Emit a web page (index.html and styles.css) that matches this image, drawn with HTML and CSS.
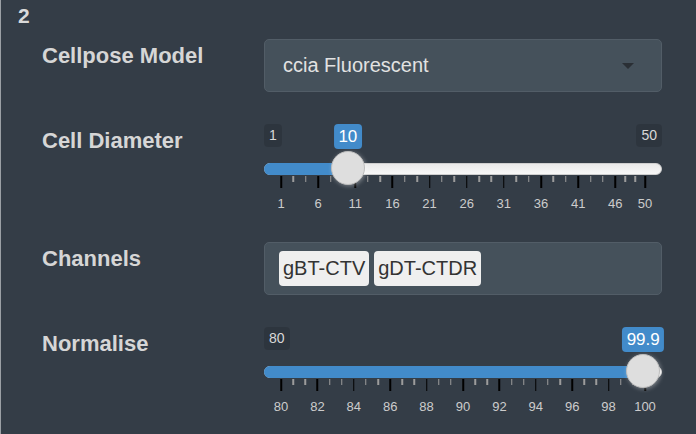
FILE: index.html
```html
<!DOCTYPE html>
<html>
<head>
<meta charset="utf-8">
<link rel="stylesheet" href="styles.css">
</head>
<body>
<div class="panel">
  <h4 class="step">2</h4>
  <div class="form">
    <div class="label">Cellpose Model</div>
    <div class="select">
      <span class="select-text">ccia Fluorescent</span>
      <span class="caret"></span>
    </div>

    <div class="label">Cell Diameter</div>
    <div class="slider">
      <div class="track"></div>
      <div class="bar" style="width:83.9px"></div>
      <span class="minmax min">1</span>
      <span class="minmax max">50</span>
      <div class="scale">
        <span class="tick" style="left:0%"></span>
        <span class="tick sm" style="left:3.401%"></span>
        <span class="tick sm" style="left:6.803%"></span>
        <span class="tick" style="left:10.204%"></span>
        <span class="tick sm" style="left:13.605%"></span>
        <span class="tick sm" style="left:17.007%"></span>
        <span class="tick" style="left:20.408%"></span>
        <span class="tick sm" style="left:23.810%"></span>
        <span class="tick sm" style="left:27.211%"></span>
        <span class="tick" style="left:30.612%"></span>
        <span class="tick sm" style="left:34.014%"></span>
        <span class="tick sm" style="left:37.415%"></span>
        <span class="tick" style="left:40.816%"></span>
        <span class="tick sm" style="left:44.218%"></span>
        <span class="tick sm" style="left:47.619%"></span>
        <span class="tick" style="left:51.020%"></span>
        <span class="tick sm" style="left:54.422%"></span>
        <span class="tick sm" style="left:57.823%"></span>
        <span class="tick" style="left:61.224%"></span>
        <span class="tick sm" style="left:64.626%"></span>
        <span class="tick sm" style="left:68.027%"></span>
        <span class="tick" style="left:71.429%"></span>
        <span class="tick sm" style="left:74.830%"></span>
        <span class="tick sm" style="left:78.231%"></span>
        <span class="tick" style="left:81.633%"></span>
        <span class="tick sm" style="left:85.034%"></span>
        <span class="tick sm" style="left:88.435%"></span>
        <span class="tick" style="left:91.837%"></span>
        <span class="tick sm" style="left:94.558%"></span>
        <span class="tick sm" style="left:97.279%"></span>
        <span class="tick" style="left:100%"></span>

        <span class="gl" style="left:0%">1</span>
        <span class="gl" style="left:10.204%">6</span>
        <span class="gl" style="left:20.408%">11</span>
        <span class="gl" style="left:30.612%">16</span>
        <span class="gl" style="left:40.816%">21</span>
        <span class="gl" style="left:51.020%">26</span>
        <span class="gl" style="left:61.224%">31</span>
        <span class="gl" style="left:71.429%">36</span>
        <span class="gl" style="left:81.633%">41</span>
        <span class="gl" style="left:91.837%">46</span>
        <span class="gl" style="left:100%">50</span>

        <span class="handle" style="left:18.367%"></span>
        <span class="single" style="left:18.367%">10</span>
      </div>
    </div>

    <div class="label">Channels</div>
    <div class="tags">
      <span class="tag">gBT-CTV</span>
      <span class="tag">gDT-CTDR</span>
    </div>

    <div class="label">Normalise</div>
    <div class="slider">
      <div class="track"></div>
      <div class="bar" style="width:379.2px"></div>
      <span class="minmax min">80</span>
      <div class="scale">
        <span class="tick" style="left:0%"></span>
        <span class="tick sm" style="left:3.333%"></span>
        <span class="tick sm" style="left:6.667%"></span>
        <span class="tick" style="left:10%"></span>
        <span class="tick sm" style="left:13.333%"></span>
        <span class="tick sm" style="left:16.667%"></span>
        <span class="tick" style="left:20%"></span>
        <span class="tick sm" style="left:23.333%"></span>
        <span class="tick sm" style="left:26.667%"></span>
        <span class="tick" style="left:30%"></span>
        <span class="tick sm" style="left:33.333%"></span>
        <span class="tick sm" style="left:36.667%"></span>
        <span class="tick" style="left:40%"></span>
        <span class="tick sm" style="left:43.333%"></span>
        <span class="tick sm" style="left:46.667%"></span>
        <span class="tick" style="left:50%"></span>
        <span class="tick sm" style="left:53.333%"></span>
        <span class="tick sm" style="left:56.667%"></span>
        <span class="tick" style="left:60%"></span>
        <span class="tick sm" style="left:63.333%"></span>
        <span class="tick sm" style="left:66.667%"></span>
        <span class="tick" style="left:70%"></span>
        <span class="tick sm" style="left:73.333%"></span>
        <span class="tick sm" style="left:76.667%"></span>
        <span class="tick" style="left:80%"></span>
        <span class="tick sm" style="left:83.333%"></span>
        <span class="tick sm" style="left:86.667%"></span>
        <span class="tick" style="left:90%"></span>
        <span class="tick sm" style="left:93.333%"></span>
        <span class="tick sm" style="left:96.667%"></span>
        <span class="tick" style="left:100%"></span>

        <span class="gl" style="left:0%">80</span>
        <span class="gl" style="left:10%">82</span>
        <span class="gl" style="left:20%">84</span>
        <span class="gl" style="left:30%">86</span>
        <span class="gl" style="left:40%">88</span>
        <span class="gl" style="left:50%">90</span>
        <span class="gl" style="left:60%">92</span>
        <span class="gl" style="left:70%">94</span>
        <span class="gl" style="left:80%">96</span>
        <span class="gl" style="left:90%">98</span>
        <span class="gl" style="left:100%">100</span>

        <span class="handle" style="left:99.5%"></span>
        <span class="single" style="left:99.5%">99.9</span>
      </div>
    </div>
  </div>
</div>
</body>
</html>
```

FILE: styles.css
```css
html, body {
  margin: 0;
  padding: 0;
  background: #343d47;
}

body {
  width: 696px;
  height: 434px;
  overflow: hidden;
  font-family: "Liberation Sans", Arial, sans-serif;
}

.panel {
  height: 434px;
  box-sizing: border-box;
  border-left: 1px solid #9ba0a5;
  padding-left: 17px;
}

.step {
  margin: 0;
  padding-top: 4px;
  font-size: 21px;
  font-weight: bold;
  line-height: 24px;
  color: #dadada;
}

.form {
  margin-top: 11px;
  margin-left: 24px;
  display: grid;
  grid-template-columns: 222px 398px;
  row-gap: 32px;
}

.label {
  padding-top: 3.5px;
  font-size: 22px;
  font-weight: bold;
  color: #d6d6d6;
}

.select {
  height: 53px;
  box-sizing: border-box;
  border: 1px solid #525d67;
  border-radius: 5px;
  background: #45515b;
  display: flex;
  align-items: center;
  justify-content: space-between;
  padding: 0 27px 0 18px;
}

.select-text {
  font-size: 20px;
  color: #e2e2e2;
}

.caret {
  width: 0;
  height: 0;
  border-left: 6.5px solid transparent;
  border-right: 6.5px solid transparent;
  border-top: 6.5px solid #2a2f35;
  margin-top: 1px;
}

.tags {
  height: 53px;
  box-sizing: border-box;
  border: 1px solid #525d67;
  border-radius: 5px;
  background: #45515b;
  display: flex;
  align-items: center;
  gap: 5px;
  padding: 0 14px;
}

.tag {
  height: 35px;
  line-height: 35px;
  padding: 0 4px;
  background: #efefef;
  border-radius: 4px;
  font-size: 20px;
  color: #333333;
}

.slider {
  position: relative;
  height: 86px;
}

.track {
  position: absolute;
  left: 0;
  right: 0;
  top: 39px;
  height: 12px;
  box-sizing: border-box;
  border: 1px solid #cfcfcf;
  border-radius: 6px;
  background: linear-gradient(to bottom, #e2e2e2 -50%, #ffffff 150%);
}

.bar {
  position: absolute;
  left: 0;
  top: 39px;
  height: 12px;
  background: #428bca;
  border-radius: 6px 0 0 6px;
}

.minmax {
  position: absolute;
  top: 0;
  height: 23px;
  line-height: 23px;
  padding: 0 5px;
  font-size: 14px;
  color: #d8d8d8;
  background: rgba(0, 0, 0, 0.12);
  border-radius: 4px;
}

.min { left: 0; }
.max { right: 0; }

.scale {
  position: absolute;
  left: 17px;
  right: 17px;
  top: 0;
  bottom: 0;
}

.tick {
  position: absolute;
  top: 52px;
  width: 1.5px;
  height: 12px;
  background: #000000;
  transform: translateX(-50%);
}

.tick.sm {
  height: 6px;
  background: #9c9c9c;
}

.gl {
  position: absolute;
  top: 72px;
  line-height: 15px;
  font-size: 13px;
  color: #cccccc;
  transform: translateX(-50%);
  white-space: nowrap;
}

.handle {
  position: absolute;
  top: 27px;
  width: 34px;
  height: 34px;
  box-sizing: border-box;
  border-radius: 50%;
  background: #dedede;
  border: 1px solid #bdbdbd;
  box-shadow: 1px 1px 4px rgba(255, 255, 255, 0.35);
  transform: translateX(-50%);
}

.single {
  position: absolute;
  top: 0;
  height: 25px;
  line-height: 25px;
  padding: 0 4.5px;
  font-size: 17px;
  color: #ffffff;
  background: #428bca;
  border-radius: 4px;
  transform: translateX(-50%);
  white-space: nowrap;
}
```
